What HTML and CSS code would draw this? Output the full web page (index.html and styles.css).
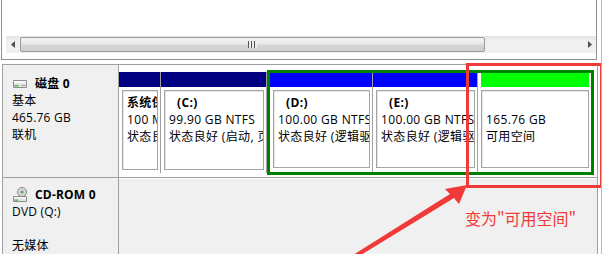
FILE: index.html
```html
<!DOCTYPE html>
<html lang="zh-CN">
<head>
    <meta charset="UTF-8">
    <meta name="viewport" content="width=device-width, initial-scale=1.0">
    <title>磁盘管理</title>
    <link rel="stylesheet" href="styles.css">
</head>
<body>
    <div class="console">
        <div class="volume-list">
            <div class="list-body"></div>
            <div class="hscroll">
                <div class="arrow">
                    <svg width="5" height="7" viewBox="0 0 5 7"><path d="M4 0 L0 3.5 L4 7 Z" fill="#4d4d4d"/></svg>
                </div>
                <div class="thumb"><span class="grip"></span></div>
                <div class="track"></div>
                <div class="arrow">
                    <svg width="5" height="7" viewBox="0 0 5 7"><path d="M1 0 L5 3.5 L1 7 Z" fill="#4d4d4d"/></svg>
                </div>
            </div>
        </div>

        <div class="disk-view">
            <div class="disk-row">
                <div class="disk-label">
                    <div class="disk-name">
                        <svg class="icon" width="16" height="10" viewBox="0 0 16 10">
                            <path d="M1.5 1.5 H14.5 V8.5 H1.5 Z" fill="#e4e4e4" stroke="#8c8c8c"/>
                            <path d="M2 2 H14 V4 H2 Z" fill="#f7f7f7"/>
                            <path d="M2.5 6 H6.5 V7.5 H2.5 Z" fill="#3fbf3f"/>
                            <path d="M9 6.5 H13.5" stroke="#a6a6a6"/>
                        </svg>
                        <b>磁盘 0</b>
                    </div>
                    <div>基本</div>
                    <div>465.76 GB</div>
                    <div>联机</div>
                </div>
                <div class="partitions">
                    <div class="part primary sys">
                        <div class="bar"></div>
                        <div class="box">
                            <b>系统保留</b>
                            <div>100 MB NTFS</div>
                            <div>状态良好 (系统, 活动, 主分区)</div>
                        </div>
                    </div>
                    <div class="part primary drive-c">
                        <div class="bar"></div>
                        <div class="box">
                            <b class="letter">(C:)</b>
                            <div>99.90 GB NTFS</div>
                            <div>状态良好 (启动, 页面文件, 故障转储, 主分区)</div>
                        </div>
                    </div>
                    <div class="extended">
                        <div class="part logical drive-d">
                            <div class="bar"></div>
                            <div class="box">
                                <b class="letter">(D:)</b>
                                <div>100.00 GB NTFS</div>
                                <div>状态良好 (逻辑驱动器)</div>
                            </div>
                        </div>
                        <div class="part logical drive-e">
                            <div class="bar"></div>
                            <div class="box">
                                <b class="letter">(E:)</b>
                                <div>100.00 GB NTFS</div>
                                <div>状态良好 (逻辑驱动器)</div>
                            </div>
                        </div>
                        <div class="part free">
                            <div class="bar"></div>
                            <div class="box">
                                <b class="letter">&nbsp;</b>
                                <div>165.76 GB</div>
                                <div>可用空间</div>
                            </div>
                        </div>
                    </div>
                </div>
            </div>

            <div class="disk-row cdrom">
                <div class="disk-label">
                    <div class="disk-name">
                        <svg class="icon" width="16" height="16" viewBox="0 0 16 16">
                            <circle cx="10" cy="5" r="4.5" fill="#d8d8d8" stroke="#8a8a8a"/>
                            <circle cx="10" cy="5" r="1.6" fill="#5fae5f"/>
                            <path d="M1.5 9.5 H14.5 V14.5 H1.5 Z" fill="#e4e4e4" stroke="#8c8c8c"/>
                            <path d="M2 10 H14 V11.5 H2 Z" fill="#f7f7f7"/>
                            <path d="M2.5 12.5 H6 V13.8 H2.5 Z" fill="#3fbf3f"/>
                        </svg>
                        <b>CD-ROM 0</b>
                    </div>
                    <div>DVD (Q:)</div>
                    <div>&nbsp;</div>
                    <div>无媒体</div>
                </div>
                <div class="empty"></div>
            </div>
        </div>

        <div class="mark-box"></div>
        <svg class="mark-arrow" width="610" height="254" viewBox="0 0 610 254">
            <path d="M353 255 L450 194 L445 189 L467 185 L459 204 L454 198 L356 258 Z" fill="#f03a3a"/>
        </svg>
        <div class="mark-text">变为"可用空间"</div>
    </div>
</body>
</html>
```

FILE: styles.css
```css
body {
    margin: 0;
    background-color: #ffffff;
    font-family: "Open Sans", "Noto Sans CJK SC", sans-serif;
    font-size: 12px;
    color: #000000;
}
.console {
    position: relative;
    width: 601px;
    height: 254px;
    border-right: 1px solid #b9b9b9;
    overflow: hidden;
}

/* upper list pane */
.volume-list {
    margin-left: 1px;
    width: 594px;
    height: 59px;
    border-left: 1px solid #8e8f8f;
    border-right: 1px solid #8e8f8f;
    border-bottom: 1px solid #8e8f8f;
    background-color: #ffffff;
}
.list-body {
    height: 36px;
}
.hscroll {
    display: flex;
    height: 17px;
    margin: 0 0 0 4px;
    background: linear-gradient(#e3e3e3, #f0f0f0 30%, #f0f0f0);
}
.arrow {
    width: 14px;
    display: flex;
    align-items: center;
    justify-content: center;
}
.thumb {
    width: 463px;
    margin: 1px 0;
    border: 1px solid #9a9a9a;
    border-radius: 2px;
    background: linear-gradient(#f3f3f3, #e8e8e8 45%, #d6d6d6 55%, #cecece);
    display: flex;
    align-items: center;
    justify-content: center;
}
.grip {
    width: 9px;
    height: 7px;
    background: repeating-linear-gradient(90deg, #555555 0 1px, #ececec 1px 3px);
}
.track {
    flex: 1;
}

/* graphical pane */
.disk-view {
    margin: 4px 0 0 2px;
    width: 594px;
    border-left: 1px solid #a0a0a0;
    border-right: 1px solid #a0a0a0;
}
.disk-row {
    display: flex;
    height: 112px;
    border-top: 1px solid #a0a0a0;
}
.disk-row.cdrom {
    height: 80px;
}
.disk-label {
    width: 106px;
    padding: 10px 0 0 9px;
    border-right: 1px solid #a0a0a0;
    background-color: #f0f0f0;
    line-height: 17px;
    letter-spacing: 0.2px;
}
.disk-name {
    display: flex;
    align-items: center;
}
.icon {
    margin-right: 7px;
}
.cdrom .disk-label {
    padding-top: 8px;
}
.partitions {
    flex: 1;
    display: flex;
    align-items: flex-start;
    background-color: #ffffff;
}
.empty {
    flex: 1;
    border-top: 1px solid #ffffff;
    background-color: #f0f0f0;
}

.part {
    display: flex;
    flex-direction: column;
    border-right: 1px solid #a0a0a0;
    padding-bottom: 3px;
    box-sizing: border-box;
}
.part.primary {
    margin-top: 7px;
    height: 101px;
}
.sys {
    width: 42px;
}
.drive-c {
    width: 106px;
}
.bar {
    height: 15px;
    background-color: #000080;
}
.box {
    flex: 1;
    margin: 3px 2px 0 3px;
    padding: 3px 0 0 4px;
    border: 1px solid #a4a4a4;
    box-shadow: inset 1px 1px 0 #e6e6e6;
    line-height: 17px;
    letter-spacing: 0.35px;
    white-space: nowrap;
    overflow: hidden;
}
.box b {
    display: block;
}
.letter {
    padding-left: 8px;
}

.extended {
    display: flex;
    margin-top: 5px;
    height: 105px;
    width: 327px;
    border: 3px solid #008000;
    box-sizing: border-box;
}
.logical .bar {
    height: 14px;
    background-color: #0000ff;
}
.part.logical {
    height: 99px;
    padding-bottom: 4px;
}
.drive-d {
    width: 103px;
}
.drive-e {
    width: 105px;
}
.part.free {
    flex: 1;
    height: 99px;
    padding-bottom: 4px;
    border-right: none;
}
.free .bar {
    height: 14px;
    margin: 0 2px 0 3px;
    background-color: #00ff00;
}

/* annotation */
.mark-box {
    position: absolute;
    left: 466px;
    top: 63px;
    width: 131px;
    height: 119px;
    border: 3px solid #f03a3a;
}
.mark-arrow {
    position: absolute;
    left: 0;
    top: 0;
}
.mark-text {
    position: absolute;
    left: 465px;
    top: 208px;
    font-family: "Noto Sans CJK SC", sans-serif;
    font-size: 16px;
    line-height: 20px;
    color: #f03a3a;
}
```
